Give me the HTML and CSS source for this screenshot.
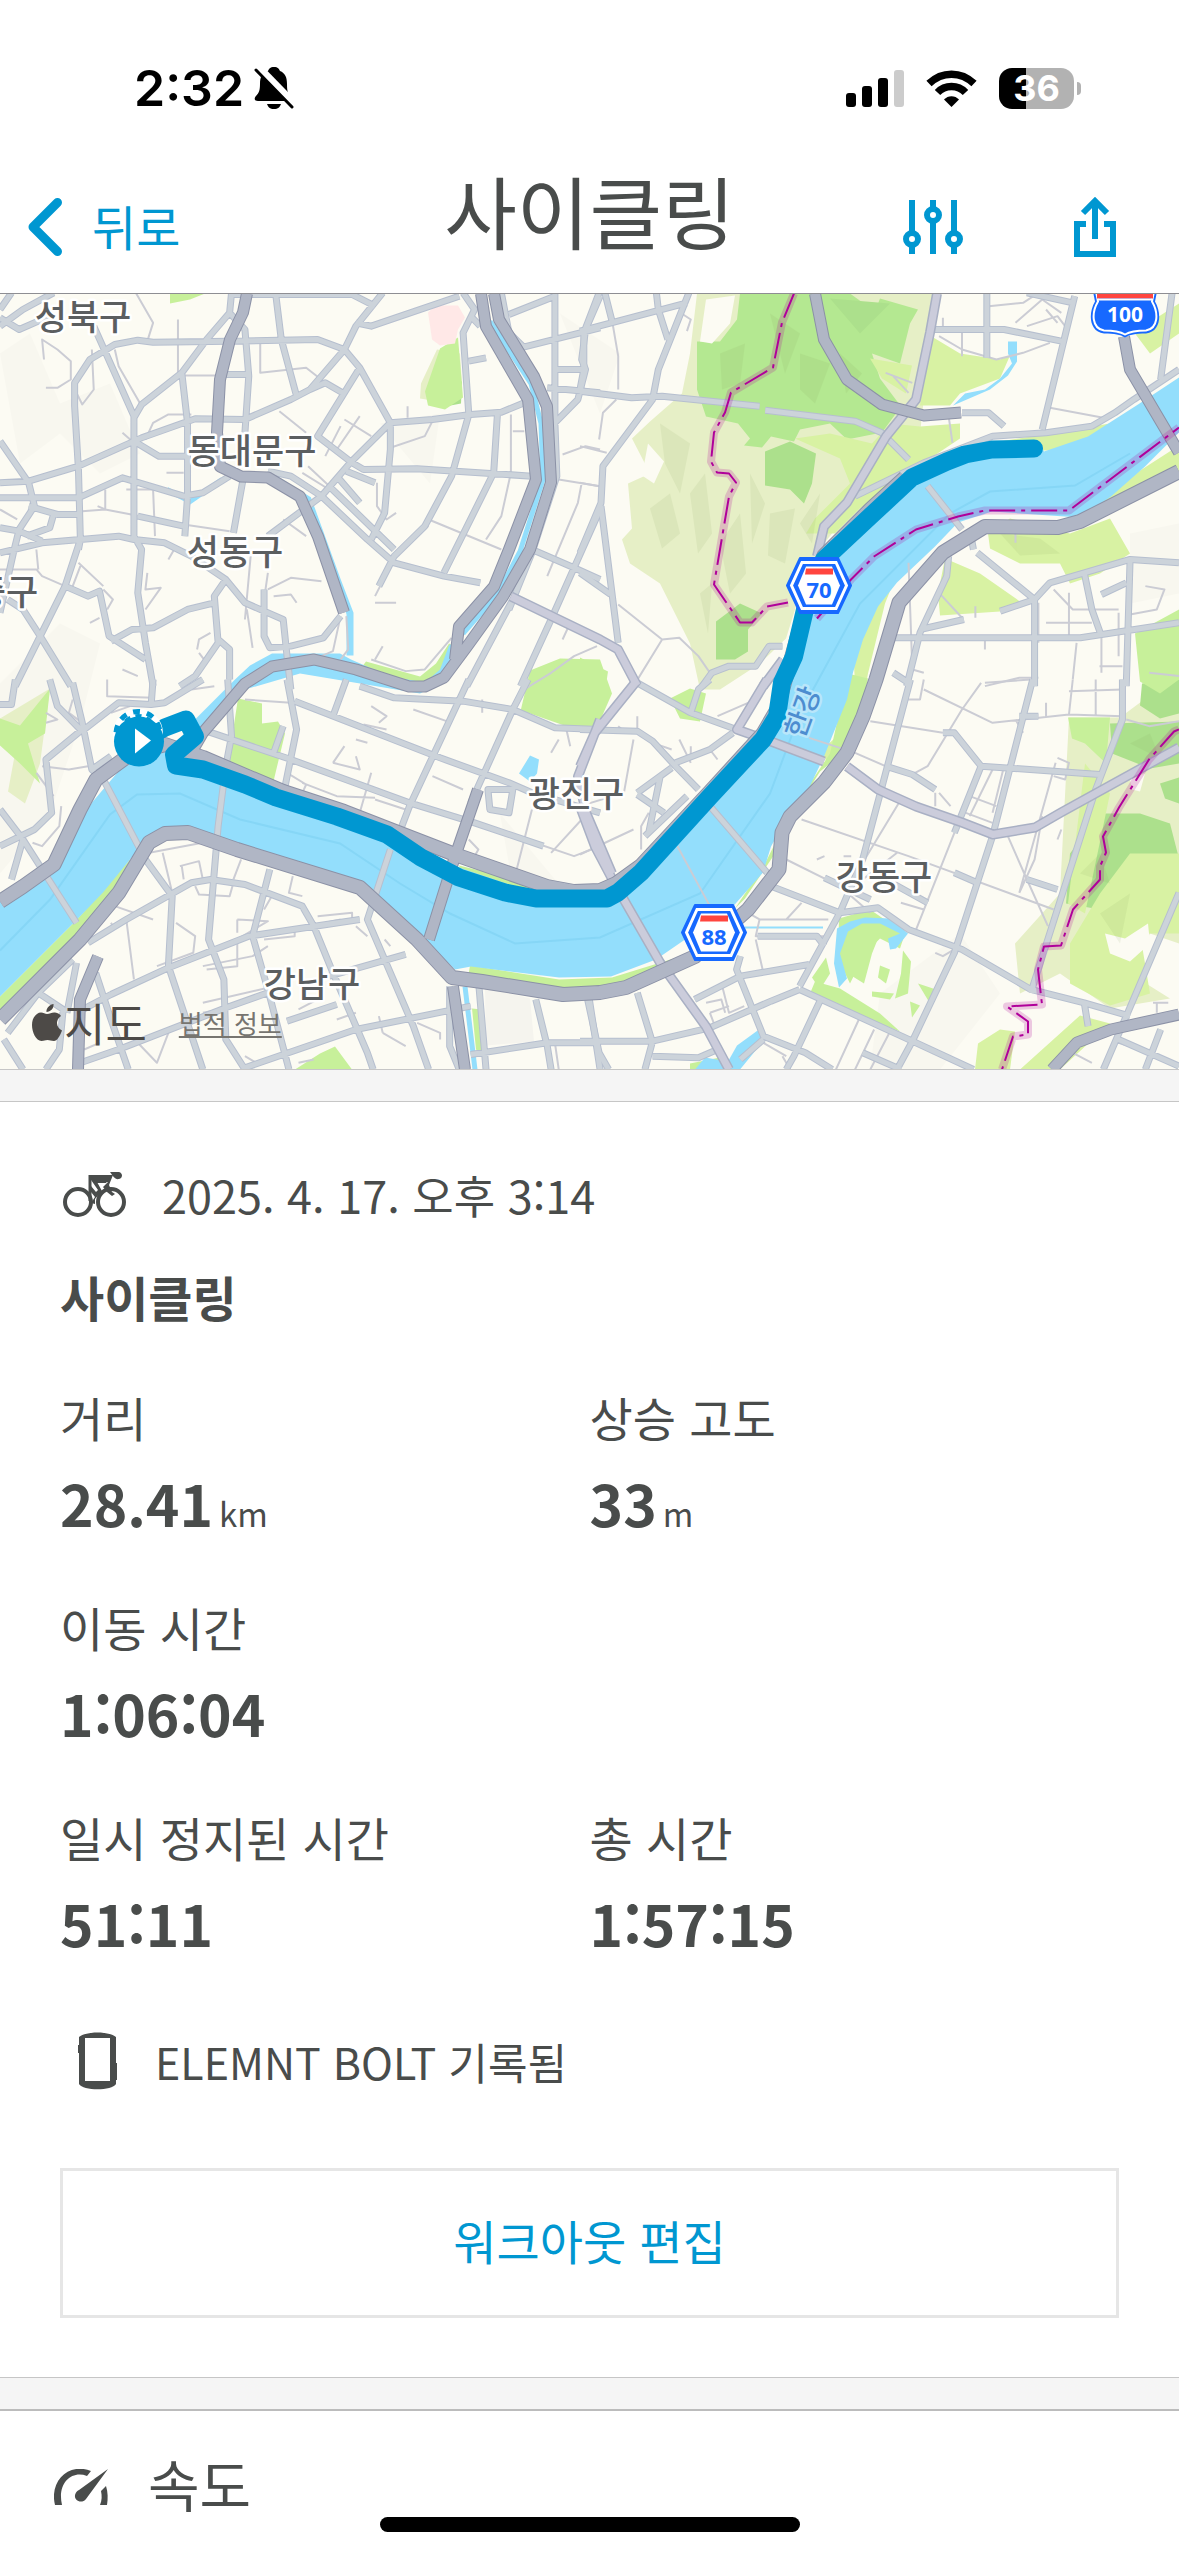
FILE: index.html
```html
<!DOCTYPE html>
<html lang="ko">
    <head>
        <meta charset="utf-8" />
        <meta name="viewport" content="width=device-width, initial-scale=1" />
        <title>사이클링</title>
        <link rel="stylesheet" href="styles.css">
    </head>
    <body>
        <header class="top">
            <div class="status">
                <div class="status-left">
                    <span class="clock">2:32</span>
                    <svg width="40" height="44" viewBox="0 0 40 44">
                        <path d="M20 1c4 0 5 2 6 4 5 2 7 6 7 13 0 8 1 10 4 13 2 2 2 4-1 4H4c-4 0-4-3-2-5 3-3 4-6 4-12 0-7 2-11 8-13 1-2 2-4 6-4zM13 38h14c-1 3-3 5-7 5s-6-2-7-5z" />
                        <path d="M3 0L40 38" stroke="#fff" stroke-width="8" />
                        <path d="M2 4L38 41" stroke="#000" stroke-width="3" stroke-linecap="round" />
                    </svg>
                </div>
                <div class="status-right">
                    <svg width="58" height="37" viewBox="0 0 58 37">
                        <rect x="0" y="23" width="10" height="14" rx="3" />
                        <rect x="16" y="16" width="10" height="21" rx="3" />
                        <rect x="32" y="8" width="10" height="29" rx="3" />
                        <rect x="48" y="0" width="10" height="37" rx="3" fill="#ccc" />
                    </svg>
                    <svg width="51" height="37" viewBox="0 0 51 37">
                        <g fill="none" stroke="#000" stroke-width="7.5">
                            <path d="M3 13.500C16 1 35 1 48 13.500" />
                            <path d="M11.500 22.500C19 14.500 32 14.500 39.500 22.500" />
                        </g>
                        <path d="M25.500 37L18 29.500C22 25 29 25 33 29.500z" />
                    </svg>
                    <div class="battery"><span>36</span></div>
                </div>
            </div>
            <nav class="nav">
                <a class="back" href="#">
                    <svg width="34" height="58" viewBox="0 0 34 58">
                        <path d="M29.500 4.500L5 29L29.500 53.500" fill="none" stroke="#0097d1" stroke-width="9" stroke-linecap="round" stroke-linejoin="round" />
                    </svg>
                    <span>뒤로</span>
                </a>
                <h1>사이클링</h1>
                <div class="tools">
                    <button aria-label="필터">
                        <svg width="60" height="60" viewBox="0 0 60 60" fill="none" stroke="#0097d1" stroke-width="6">
                            <path d="M9 3V36M9 48V57M30 3V12M30 24V57M51 3V36M51 48V57" />
                            <circle cx="9" cy="42" r="6" />
                            <circle cx="30" cy="18" r="6" />
                            <circle cx="51" cy="42" r="6" />
                        </svg>
                    </button>
                    <button aria-label="공유">
                        <svg width="42" height="60" viewBox="0 0 42 60" fill="none" stroke="#0097d1" stroke-width="6">
                            <path d="M12 27H3V57H39V27H30M21 42V5M9 16L21 4L33 16" />
                        </svg>
                    </button>
                </div>
            </nav>
        </header>

        <div class="map">
            <svg class="map-canvas" viewBox="0 0 1179 776" preserveAspectRatio="xMidYMid slice">
                <defs>
                    <!-- local streets, one sheet for each quarter of the map -->
                    <g id="streets">
                        <path transform="translate(0 -4) scale(.3827 .3333)" d="M0 110L60 60L140 10M0 85L50 120L130 80M0 60L30 10M245 110L350 380V750M205 780L210 750L205 540L195 350V280L235 210L300 165L360 152L400 158L600 155L830 150L900 180L940 235L1020 400L1130 390L1230 375L1310 368L1370 340M605 10L600 70L540 150L475 250L370 345L350 385M475 250L490 400V620L483 740M720 10L735 150L775 320M600 15H920L980 50M1000 10L930 110L900 180L810 300L760 330L640 390L510 388L370 445L205 530L75 575L0 580M600 70L640 120L650 260L640 430M590 255H650M930 100L970 110L1200 20M1210 10L1240 60L1210 130L1225 375L1180 560L1110 710L1030 800L990 890M1230 80L1255 110M1225 215L1270 205M940 235L830 440L920 520L950 540L1090 538L1390 560M810 300L850 280L895 310M1020 400L915 520L840 620L700 740M1020 400V480L1005 670L970 750M1300 370L1290 550L1160 850M860 590L1030 780M700 545L760 560L840 620L960 750L1030 820L1160 860L1255 880M905 545L980 580M880 560L940 640M0 455L75 580L90 650L50 720L35 790L0 970M0 625H205L320 565L480 620L530 610L600 560M75 650L150 675H210M140 675L130 715L70 740M0 715L50 725L110 755M0 790L110 760L310 740L350 750L430 760L500 800L590 870L640 940L740 990L750 1100L760 1200M350 560V740L370 780L360 910L380 1060L400 1190M210 750L170 890L105 1040L40 1190M20 930L60 960L105 1040L185 1190M170 890L230 920L260 905L285 1040L380 1110M290 1055L345 1020L400 1015L490 960L560 940M590 870L560 920L570 1060L510 1160L470 1190M570 1050L600 1080V1170M690 900V1040L705 1075L760 1070L845 1045L890 980M635 570L610 730M360 680L480 710M350 455L415 500H490M1310 10L1330 130L1370 175M1450 10V400M1330 75L1450 20M1360 175L1568 115M1568 20L1530 120L1520 210L1530 240L1510 330L1450 400M1450 240H1525M1430 295L1568 310M1450 400L1455 560L1390 790L1330 960M1390 780L1500 835L1568 870M1568 660L1500 835L1440 990L1360 1190M1340 930L1220 1190" />
                        <path transform="translate(580 -4) scale(.382 .3333)" d="M50 10L10 130V240L0 300M0 125L280 40M65 10L85 100M200 10L205 60L230 150M285 10L205 240L190 330L60 530L55 640L0 790M55 650L100 1060M0 305L135 325L215 320L470 350M485 362L720 395L790 430L860 510M925 120H1110L1260 155M1065 10V205M1295 20L1210 420M1170 10L1290 40M1568 240L1450 330L1400 370L1340 410L1220 430L1080 440L900 520L720 620M1550 10L1520 270M910 590L1000 720M1040 790L1190 930V1190M965 800L960 860L890 1030L855 1190M820 1045H1310L1568 1000M890 1020L1005 990M1100 965L1190 930L1230 880L1320 850L1440 810L1568 820M1440 810L1430 1190M1320 850L1340 960L1365 1040M1365 915L1430 880M0 850L80 915M530 1070H495L460 1130H390L345 1150L320 1190M820 1150L860 1180M1000 370H1070L1110 410M1030 780L1020 720" />
                        <path transform="translate(0 386) scale(.3827 .3333)" d="M40 0L30 75H0M130 0L150 80L210 150M190 10L215 130L240 270L270 300L380 540L450 650L440 860L530 1170M215 150L120 240L135 400L90 450L0 500M0 390L60 480L110 570L200 730M60 480L30 600M240 270L290 230M400 0L395 75L310 70L220 150M395 75L430 70L530 0M750 0L775 150L745 320M770 65L1150 235L1330 310L1390 340L1568 400M540 155L760 240L1070 370L1240 430L1420 500M905 0L870 110M940 20L1030 55L1210 65L1340 90L1450 145L1568 150M1225 0L1070 380L1050 440M1380 0L1340 90L1230 370M595 0L605 170L590 260L570 440L545 780L585 900L590 1080L640 1170M1020 510L980 650L960 720L1080 1040L1120 1170M230 790L330 720L500 610L550 600L640 615L790 680L820 740L870 880L960 1120L975 1170M705 570L660 770L700 930L755 1170M290 945L440 865L650 770L940 720M250 880L290 1020L335 1170M20 1060L100 940L190 840M100 940L165 990L155 1110L120 1170M10 1080L60 1170M200 850L175 1000M210 1150L310 1110L590 985L700 940M200 1000L290 945M1060 825L860 890M750 1025L880 975M640 1165L930 1050L1230 980M1175 920V1100L1200 1170M1230 1125L1430 1090H1568M1250 900L1270 1170M1400 960L1430 1100L1440 1170M1540 960L1568 1170M1275 330L1280 390L1330 400L1340 330ZM740 140L715 220" />
                        <path transform="translate(580 386) scale(.382 .3333)" d="M0 150L150 155L190 185L250 260L310 330M150 10L290 100L410 150M290 100L310 30L340 0M250 250L340 210L400 160M150 340L240 265M150 345L220 400M210 290L180 460M280 350L170 470M340 380L490 580M500 620L680 700L780 685L860 750L1000 810L1180 930L1320 970L1440 1010M865 0L740 540L680 700L575 920M1185 0L1080 470L980 820L870 1085L830 1170M1420 0V120L1350 330L1180 940M1050 260L1360 285M950 160H980L1050 260L980 460M800 260L870 285L930 330M1150 110H1200M575 930L870 1085L1030 1170M630 960L560 1130L540 1170M575 930L500 965L340 1045L190 1085H0M300 960L420 890L600 855M420 830L410 870L480 1070L590 1120L660 1170M190 1090L150 940M480 1080L420 1140M20 960L50 1120L75 1170M190 1085L170 1170M190 1130L310 1135L360 1110M465 770H620L640 800M1568 640L1430 1010L1370 1170M1410 1080L1568 1160M740 1120L840 1170M980 580L1040 610M1170 600L1250 630M1320 970L1330 1040M1520 1050L1480 1170M640 595L760 660M800 600L910 670" />
                    </g>
                    <g id="mains">
                        <path d="M511 303L600 346L618 356L637 392M937 0L930 39L916 106L886 143L847 209L824 233L817 263M783 366L763 393" />
                        <path d="M600 426L578 483L586 519L612 580M637 387L595 439L580 473M767 386L737 436L771 448L824 468M847 473L878 496L916 513L962 529L993 541L1035 534L1061 519L1179 454M580 513L595 553L614 589L660 669L706 733L729 776" />
                    </g>
                    <g id="motorways">
                        <path d="M0 608L23 593L54 571L80 516L96 486L130 461L165 451L203 464L283 498L344 518L398 539L455 561L547 593L574 598L600 597L616 590L641 572L710 498L763 440L777 416L805 316L824 262L870 216L905 184M0 726L80 646L119 599L149 549L165 540L188 539L237 556L360 594L417 646L452 684L482 688L563 701L600 699L626 694L695 663L748 616L779 576L782 539L790 523L824 489L847 459L863 423L876 386L899 309L943 259L985 233L1058 234L1080 228L1179 178" />
                    </g>
                    <g id="expressways">
                        <path d="M481 0L486 33L528 106L536 186L509 256L494 293L459 333L455 366M494 0L499 26L534 83L547 113L551 189L530 256L503 303L467 353L444 384L425 393H409L356 376L314 366L272 373L245 390L203 439L192 458M247 0L243 19L230 46L220 86L217 139L220 173L241 183L268 184L300 203L318 243L344 319M815 0L824 46L847 86L882 111L924 122L961 119M1124 43L1130 76L1179 159M1052 776L1077 749L1111 736L1179 721M478 496L455 563L429 646M453 693L465 776M98 663L80 706L78 776" />
                    </g>
                </defs>

                <rect width="1179" height="776" fill="#fcfbf3" />

                <!-- hillsides -->
                <path class="shade" d="M0 60L30 40L60 110L110 90L140 160L100 180L60 140L20 170ZM0 390L30 360L60 330L100 350L80 430L50 520L0 580ZM560 20L620 60L600 120ZM500 520L530 690L600 640ZM870 40L900 60ZM1130 240L1179 230V300L1130 310ZM880 700L960 640L1000 700L940 776H870ZM380 130L440 120L430 190Z" />

                <!-- parks and woods -->
                <path class="pale" d="M697 0L690 60L682 100L650 128L632 145L650 180L628 190L632 235L622 246L630 270L660 290L670 310L690 350L700 396H720L760 370L786 345L800 300L824 250L860 205L900 175L920 140L930 50L937 0Z" />
                <path class="pale" d="M1069 424L1120 424L1179 380V650L1150 640L1130 680L1170 705L1110 715L1060 680L1020 700L1015 650L1060 600ZM421 90L437 56L460 60L462 90L450 110L420 105ZM0 425L50 395L40 470L25 510L8 498L15 460L0 450Z" />
                <path class="green" d="M740 0L737 26L720 48L697 48V96L706 123L738 130L750 145L744 152L762 154L771 143L794 148L800 136L830 130L847 146L882 139L901 113L880 85L872 60L900 70L910 30L918 16L880 5L875 18L850 0Z" />
                <path class="leaf" d="M765 158L790 148L816 160L812 190L804 210L790 196L765 192ZM716 328L740 310L762 320L748 336V358L735 366L716 366ZM430 106L440 86L462 88L461 110L440 114ZM1110 430L1179 428V470L1150 475L1112 460ZM1070 560L1100 520L1140 520L1170 530L1179 565L1130 580L1110 600L1100 616L1066 610ZM1142 390L1179 386V420L1160 425L1140 412ZM830 5L890 10L860 40ZM1160 490L1179 484V510L1165 505Z" />
                <path class="lime" d="M930 42L960 60L1000 66L1010 62L1000 85L960 100L950 112L920 112ZM795 145L830 140L872 150L890 130L920 133L960 130L960 145L900 185L860 215L835 240L806 240L815 225L850 190L840 165ZM870 65L912 72L906 100L882 85ZM985 156L1000 148L1110 130L1100 142L1050 157ZM988 240L1010 225L1070 240L1110 225L1130 260L1100 280L1070 290L1060 270L1020 270L990 255ZM945 265L980 280L1020 308L1000 318L940 322L938 300ZM1080 228L1120 190L1179 152V178L1090 222ZM1070 650L1100 600L1130 560L1179 560V640L1140 640L1150 700L1110 712L1070 690ZM975 776L978 750L1000 736L1015 738L1010 776ZM1020 776L1080 722L1110 730L1060 776ZM1085 470L1110 500L1085 620L1068 610ZM1120 20L1140 35L1179 10V40L1150 60ZM850 300L897 280L885 310L868 380L855 450L835 480L820 458L840 440L855 390Z" />
                <path class="grass" d="M238 405L262 410V430L278 428L285 440L272 494L240 482L228 470ZM520 420L530 377L560 365L600 366L612 400L598 432L570 434L530 420ZM580 364L608 378L600 432H580ZM670 405L690 395L706 400L700 428L680 425ZM425 98L440 55L458 44L463 104L445 116L428 112ZM170 0L205 0L190 6L170 10ZM0 425L20 432L50 395L45 440L28 450L40 490L20 470L0 452ZM1135 340L1179 316V386L1160 400L1140 388ZM1068 424H1110L1106 470L1085 450L1072 445ZM445 384L455 353L449 350L436 370L420 383L366 368L360 376L410 390ZM0 703L77 626L130 566L133 580L80 650L0 722ZM295 776L320 760L335 753L352 776ZM839 625L870 616L905 640L900 655L880 645L865 660L850 690L838 665ZM815 688L840 695L880 720L900 738L860 722L810 700ZM470 672L559 686L612 684L690 660L688 672L620 694L558 698L468 684ZM459 572L500 582L545 600H500L462 582ZM472 715L482 716V760L476 756ZM848 380L868 385L855 450L820 478L800 510L775 560L745 605L735 615L765 570L790 520L830 460ZM690 770L720 764L735 776H690ZM903 657L911 668L908 700L895 705L901 680Z" />
                <path class="grass" d="M846 640L868 626L880 640L872 660L864 690L848 680ZM880 672L890 676L886 690L878 684ZM872 698L894 700L890 706L872 703ZM910 708L920 712L912 724ZM918 690L936 696L930 710ZM812 684L826 664L830 680L820 696Z" />
                <path fill="#fcfbf3" d="M1105 640L1125 645L1148 630L1150 650L1130 668L1110 660ZM1130 486L1145 480L1140 498L1132 496ZM706 6L735 2L730 30L712 50L700 48ZM648 150L664 168L654 190L642 182Z" />
                <g class="ridges">
                    <path d="M660 130L690 150L680 200L665 170ZM690 200L705 180L712 240L698 260ZM650 215L670 200L680 240L662 255ZM720 250L740 220L746 280L730 300ZM750 180L765 210L752 250ZM770 220L795 215L785 270L768 262ZM700 300L712 290L708 340ZM800 230L820 200L812 250Z" />
                    <path d="M720 60L745 50L740 90L722 96ZM770 20L800 40L785 80ZM800 60L830 70L815 110L800 96ZM840 60L862 80L846 100ZM1080 580L1100 560L1110 590ZM1130 450L1150 440L1160 465ZM1100 620L1130 600L1120 650ZM1000 240L1040 245L1060 260L1020 262Z" />
                </g>
                <path fill="#ffe8e7" d="M428 19L436 12L458 12L465 24L458 36L455 50L440 52L432 46L430 32Z" />
                <path fill="#f5f4ee" d="M485 694L530 705L534 748L486 752Z" />

                <!-- water -->
                <path class="water" d="M0 606L57 566L92 509L126 469L145 455L165 446L191 463L245 488L337 520L387 536L459 574L536 600L607 602L641 575L710 500L763 440L777 420L782 386L805 316L824 266L870 220L912 182L947 165L992 152L1040 150L1044 158L1088 143L1138 111L1179 84V139L1145 173L1111 203L1080 224L992 218L958 229L935 253L897 289L878 313L863 346L853 379L847 406L824 463L805 503L788 523L771 553L763 579L733 613L656 666L611 683L559 684L471 673L455 676L421 643L379 609L356 588L268 564L214 546L180 533L153 539L130 566L103 599L77 626L0 703Z" />
                <path class="water" d="M235 386L250 372L272 360H340L351 366L390 383L425 389L440 376L449 352L460 345L450 385L420 400L300 380L245 396L195 448L183 438Z" />
                <path class="water" d="M953 112L965 100L985 96L1000 85L1012 70L1008 60V48H1017V68L1008 82L990 96ZM519 480L530 462L539 466L537 480L530 488ZM728 768L737 752L759 736L763 748L740 776H695L705 764ZM837 635L850 628L865 624L890 625L908 640L896 655L890 656L888 645L900 640L880 630L862 630L848 638L840 660L847 685L839 694L834 670Z" />
                <path d="M276 186L308 206L337 286L350 320V362" fill="none" stroke="#93defc" stroke-width="7" />
                <path d="M490 28L531 90L541 130L543 186L520 258L498 300L463 340M465 693L475 776M167 196L190 208L222 186" fill="none" stroke="#93defc" stroke-width="5" />
                <path d="M745 634H823" fill="none" stroke="#93defc" stroke-width="2" />
                <path d="M0 657L50 606L110 521L137 501L180 500L240 526L340 550L400 590L450 620L515 650L600 644L700 600L770 500L800 420L860 310L950 220L990 198L1075 192L1130 160" fill="none" stroke="#86d6f6" stroke-width="2" />

                <!-- lanes -->
                <g class="lanes">
                    <path transform="translate(0 -4) scale(.3827 .3333)" d="M355 10L400 100L385 155M465 90V250M115 210L110 150L150 180L185 215V270L150 295H120M240 180L245 300L215 345L200 310M300 180L310 230L365 340M680 160V250L800 235L850 280M470 258H590M380 450L400 400L440 375H500M320 430L350 460M730 365L800 430M850 500L890 410M880 480L940 380M900 390L970 440M1065 350V385M1130 395L1110 440L1020 475M1335 375V550L1310 680L1270 750M1120 690L1310 780M1340 425H1370M1470 495L1530 470L1568 480M1460 570L1568 590M1520 580L1510 640L1430 860M0 660L45 690M215 665L275 660L480 705L600 725M275 600V660L255 650M400 600L405 740M330 600H400M435 550H480M440 810L455 780M0 840H95L110 860L170 890M95 780L100 840M205 820L270 890M210 830L190 890M385 850L380 900L420 895L380 960M270 900L295 930L280 960M235 1000L260 985M320 1140L360 1160M515 1080L520 1050L550 1030M520 1090L540 1120M640 990L655 800M700 850L690 930M700 900L760 865L840 875M715 920L760 915L775 940M980 940H1035M980 920L1020 830M1000 1070L980 1110M970 1110L1060 1145L1110 1140L1180 1045M1560 1070L1500 1100L1440 1150L1370 1200M1470 1050L1490 1000M790 550L860 600M805 530L870 600M985 580V650L1010 690L1035 670M1100 720L1120 710M645 960L660 1075M740 690L800 740M890 980L870 1085L840 1100M905 980L910 1080L890 1110" />
                    <path transform="translate(580 -4) scale(.382 .3333)" d="M85 100L100 200V300M0 470L70 490M95 330L60 370L50 450M0 580L50 590M270 75L290 90L280 125M950 85V115M1000 120V200M940 140L1000 180L1090 210L1160 190L1230 160M1070 50L1160 40L1200 10M1140 100L1210 30L1260 70M1170 110L1250 80L1270 110M1250 100L1220 60M1230 355L1370 385M965 380L975 460M800 250L870 280M820 260L860 310M700 1000M100 945L215 1050L260 1045L310 1100L340 1150M215 1050L140 1190M940 910L1000 985M1035 950V985M1060 1050V1080M1200 940V1060M1220 1000H1340M1280 910V1040M1240 900L1290 960H1410M1300 1060L1290 1170M1365 1040V1150M1410 970V1100M1360 1130H1420M1480 890L1530 900L1510 960L1440 975M1060 1190L1150 1165H1200M1140 730V760M1490 1150L1568 1160M860 820L870 1140L900 1150" />
                    <path transform="translate(0 386) scale(.3827 .3333)" d="M280 0V50L400 55M190 60L180 100L215 130M120 130L150 120L120 100M110 260L180 270L230 260M160 380L155 440L110 500L85 490M95 280L140 350M290 100L340 80M500 30L560 20M640 60L760 70M970 80L1010 110L990 130M950 135L1010 150M1080 90L1180 130M930 180L960 190M870 250L900 200M870 250L940 270L930 230M790 310L880 350L980 355M980 360L1060 390M750 280L800 315L790 340M1130 290L1210 330M1480 150L1490 200M1390 390L1350 570M1270 440L1500 530L1568 500M1440 520L1520 420M390 520L550 485M425 520L450 640M470 560L520 545L530 600M480 600L475 560M510 620L520 645L600 650L610 610M630 540L610 600M765 590L755 640L790 650M690 690L710 650M620 720L700 725L620 780V860L540 870M620 720V760M690 780L770 770V750M700 800L660 830L530 860M460 730L510 770L505 820L410 860M300 680L400 720M330 720L350 900M290 730L300 750M830 710L920 700V720M850 730L890 720M930 740L960 770M1005 780L1020 800M530 970L700 925M530 1000L620 980M780 990L830 960M880 1020L930 1000M990 1010L1000 1060M1090 1030L1150 1060V1080M1000 1060L1060 1100M360 1090L410 1150L440 1060M220 1110L260 1090M780 1150L820 1140M640 1130L670 1150M1225 480L1250 510L1240 530M1450 1090L1460 1170M1440 220L1460 180M970 280L940 400M1260 60V100" />
                    <path transform="translate(580 386) scale(.382 .3333)" d="M140 180L115 340L0 380M0 525L140 450M100 140L120 160M150 110V150M160 510V440L180 400M190 190L240 210M290 200V230M260 180L290 250M360 110L440 70M340 210L360 240M255 500L340 680M600 175L720 220L810 265M760 125L950 160M900 0L890 60H850M900 30L1080 130L1280 105L1420 110M1000 90L910 260L870 285M1050 10L1000 90M1350 0V110M1290 0L1280 105M1220 110V70M1140 120L1160 160M1180 0L1060 10M1280 35L1420 30M1430 120L1490 140L1568 125M1250 235L1280 250L1270 300L1240 290M1245 250L1150 640M1080 270L1020 410M1060 250M1110 260L1080 400M1020 350L1090 380M1010 400L1080 430M930 340V380M940 340L970 380M580 420L860 530L1240 690M835 370L740 550M980 460L880 750M830 520L740 600M540 540L680 620L760 700M1120 470L1170 600L1225 740M1210 410L1190 540L1150 640M1260 450L1250 480M820 200L810 230M440 700L470 720H650M470 720L460 770H640M580 670L540 720M460 780L480 880M840 670L900 690M620 540L640 530M690 530H710M330 970L370 960L380 1000M340 1000L390 980M370 910L390 1000L430 980M340 1000L350 1030M730 1020L670 1170M770 1050L720 1170M810 1060L760 1170M530 1130L550 1170M480 1090L540 1130M930 820L950 830L980 810M1410 1090L1520 1130M1290 1120L1340 1150M1500 970H1540M1510 1000V970" />
                </g>

                <use class="street-edge" href="#streets" />
                <use class="street" href="#streets" />
                <use class="main-edge" href="#mains" />
                <use class="main" href="#mains" />
                <use class="express-edge" href="#expressways" />
                <use class="motor-edge" href="#motorways" />
                <use class="express" href="#expressways" />
                <use class="motor" href="#motorways" />

                <!-- city limits -->
                <g class="limits">
                    <path class="halo" d="M794 0L782 29L773 74L731 99L725 119L714 139L711 168L717 179L729 180L736 189L729 203L714 291L740 329H752L767 313L788 309M817 325L851 286L874 263L916 236L958 223L985 217H1069L1179 134M1179 436L1174 438L1149 466L1119 514L1103 543L1106 559L1100 573V586L1073 616L1061 652L1044 653L1038 676L1042 711L1007 713L1028 728V741L1013 743L1002 776" />
                    <path class="dash" d="M794 0L782 29L773 74L731 99L725 119L714 139L711 168L717 179L729 180L736 189L729 203L714 291L740 329H752L767 313L788 309M817 325L851 286L874 263L916 236L958 223L985 217H1069L1179 134M1179 436L1174 438L1149 466L1119 514L1103 543L1106 559L1100 573V586L1073 616L1061 652L1044 653L1038 676L1042 711L1007 713L1028 728V741L1013 743L1002 776" />
                </g>

                <!-- recorded track -->
                <path class="track" d="M150 442L165 434L186 426L195 443L174 461L176 472L203 476L245 491L276 504L337 523L387 541L421 564L459 584L505 599L536 605H607L618 599L641 579L710 503L763 446L777 423L782 389L794 363L805 316L824 266L870 223L912 184L947 168L965 161L992 156L1034 155" />
                <circle cx="138" cy="440" r="20" fill="none" stroke="#fff" stroke-width="10" />
                <circle cx="138" cy="440" r="22" fill="none" stroke="#0097d1" stroke-width="5" stroke-dasharray="7 7" />
                <circle cx="138" cy="440" r="17" fill="none" stroke="#0097d1" stroke-width="5" stroke-dasharray="6 5" />
                <circle cx="139" cy="448" r="25" fill="#0097d1" />
                <path d="M135 435L151 447L135 460Z" fill="#fff" />

                <!-- road shields -->
                <g transform="translate(819 292)">
                    <path d="M-19 -27.500H19L32 0L19 27.500H-19L-32 0Z" fill="#1769ff" stroke="#1769ff" stroke-width="2" stroke-linejoin="round" />
                    <path d="M-17 -23H17L27.500 0L17 23H-17L-27.500 0Z" fill="none" stroke="#fff" stroke-width="3" />
                    <path d="M-13 -19H13L21 0L13 19H-13L-21 0Z" fill="#fff" />
                    <path d="M-13 -17H14V-11H-14Z" fill="#ff453f" />
                    <text class="shield-no" y="12">70</text>
                </g>
                <g transform="translate(714 639)">
                    <path d="M-19 -27.500H19L32 0L19 27.500H-19L-32 0Z" fill="#1769ff" stroke="#1769ff" stroke-width="2" stroke-linejoin="round" />
                    <path d="M-17 -23H17L27.500 0L17 23H-17L-27.500 0Z" fill="none" stroke="#fff" stroke-width="3" />
                    <path d="M-13 -19H13L21 0L13 19H-13L-21 0Z" fill="#fff" />
                    <path d="M-13 -17H14V-11H-14Z" fill="#ff453f" />
                    <text class="shield-no" y="12">88</text>
                </g>
                <g>
                    <path d="M1093 -2L1095 8C1088 20 1089 38 1104 40C1115 40 1120 41 1125 44C1130 41 1135 40 1146 40C1161 38 1162 20 1155 8L1157 -2Z" fill="#1769ff" />
                    <path d="M1096 -2L1098 8C1091 20 1092 35 1104 37C1115 37 1120 38 1125 41C1130 38 1135 37 1146 37C1158 35 1159 20 1152 8L1154 -2Z" fill="none" stroke="#fff" stroke-width="2" />
                    <path d="M1097 0H1153V5H1097Z" fill="#ff453f" />
                    <path d="M1098 6H1152" stroke="#fff" stroke-width="2" />
                    <text class="shield-no light" x="1125" y="28">100</text>
                </g>

                <g class="places">
                    <text x="83" y="36">성북구</text>
                    <text x="252" y="170">동대문구</text>
                    <text x="235" y="271">성동구</text>
                    <text x="6" y="311">중구</text>
                    <text x="576" y="513">광진구</text>
                    <text x="312" y="703">강남구</text>
                    <text x="884" y="596">강동구</text>
                    <text class="river" transform="translate(812 422) rotate(-70)">한강</text>
                </g>
            </svg>
            <div class="attribution">
                <span class="maker">
                    <svg width="30" height="38" viewBox="0 0 30 38">
                        <path d="M15 10C18 10 20 8 23 8.500C26 9 28 10 29 12C23 16 24 24 30 26.500C28 32 25 37 22 37C19 37 18 36 15.500 36C13 36 12 37 9.500 37C4 37 0 28 0 21C0 13 5 8.500 9 8.500C11.500 8.500 13 10 15 10ZM14.500 8C14 4 18 .5 21.500 0C22 4 19 8 14.500 8Z" fill="#4d4a47" />
                    </svg>
                    지도
                </span>
                <a href="#">법적 정보</a>
            </div>
        </div>

        <main>
            <section class="summary">
                <div class="when">
                    <svg width="63" height="46" viewBox="0 0 63 46">
                        <g fill="none" stroke="#494c4b" stroke-width="4">
                            <circle cx="15" cy="30" r="13" />
                            <circle cx="48" cy="30" r="13" />
                        </g>
                        <path d="M26 3H50L46 13L49 20L52 22L49 24L44 20L40 15L45 10H34L39 19L32 27V32L28 31L32 25L28 20V14L33 20L35 18L26 5Z" fill="#494c4b" />
                        <path d="M27 3V29" stroke="#494c4b" stroke-width="3" />
                        <path d="M28 4H48L43 11H34Z" fill="#494c4b" />
                        <path d="M47 0H56C60 1 60 6 56 7C52 8 50 4 47 0Z" fill="#494c4b" />
                    </svg>
                    <time datetime="2025-04-17T15:14">2025. 4. 17. 오후 3:14</time>
                </div>
                <h2>사이클링</h2>
                <dl class="stats">
                    <div>
                        <dt>거리</dt>
                        <dd>28.41<small>km</small></dd>
                    </div>
                    <div>
                        <dt>상승 고도</dt>
                        <dd>33<small>m</small></dd>
                    </div>
                    <div class="wide">
                        <dt>이동 시간</dt>
                        <dd>1:06:04</dd>
                    </div>
                    <div>
                        <dt>일시 정지된 시간</dt>
                        <dd>51:11</dd>
                    </div>
                    <div>
                        <dt>총 시간</dt>
                        <dd>1:57:15</dd>
                    </div>
                </dl>
                <div class="device">
                    <svg width="39" height="58" viewBox="0 0 39 58" fill="#494c4b">
                        <path fill-rule="evenodd" d="M1 5C8 -1 31 -1 38 5V52C34 59 5 59 1 52ZM7 6V49H32V6Z" />
                        <rect x="0" y="13" width="3" height="8" />
                        <rect x="36" y="31" width="3" height="17" />
                    </svg>
                    <span>ELEMNT BOLT 기록됨</span>
                </div>
                <button class="edit">워크아웃 편집</button>
            </section>
            <section class="speed">
                <svg width="54" height="36" viewBox="0 0 54 36" fill="#494c4b">
                    <path d="M1 36C-5 12 15 -7 37 2L33 7C17 1 3 15 8 36Z" />
                    <path d="M54 0L32 30C28 35 20 32 21 26C22 23 23 22 25 21Z" />
                    <path d="M52 17C54 23 54 30 53 36H46C48 31 48 27 47 22Z" />
                </svg>
                <h3>속도</h3>
            </section>
        </main>
        <div class="home-bar"></div>
    </body>
</html>
```

FILE: styles.css
```css
html, body {
    margin: 0;
    padding: 0;
}
body {
    min-height: 100vh;
    background: #fff;
    color: #494c4b;
    font-family: "Noto Sans CJK KR", sans-serif;
    font-size: 47px;
    line-height: 60px;
}
h1, h2, h3, dl, dd {
    margin: 0;
}
svg {
    display: block;
    flex: none;
}
button {
    font: inherit;
    color: #0097d1;
    background: none;
    border: 0;
    padding: 0;
}

/* header */
.top {
    border-bottom: 1px solid #8e8e93;
}
.status {
    display: flex;
    justify-content: space-between;
    align-items: center;
    height: 176px;
    padding: 0 105px 0 134px;
    box-sizing: border-box;
    font-family: Inter, sans-serif;
    color: #000;
}
.status-left {
    display: flex;
    align-items: center;
    gap: 10px;
}
.clock {
    font-size: 50px;
    font-weight: 600;
}
.status-right {
    display: flex;
    align-items: center;
    gap: 22px;
}
.battery {
    position: relative;
    width: 75px;
    height: 41px;
    border-radius: 13px;
    background: linear-gradient(to right, #000 27px, #b2b2b2 27px);
    color: #fff;
    font-size: 36px;
    font-weight: 700;
    line-height: 41px;
    text-align: center;
}
.battery::after {
    content: "";
    position: absolute;
    right: -7px;
    top: 14px;
    width: 4px;
    height: 13px;
    border-radius: 0 4px 4px 0;
    background: #b2b2b2;
}
.nav {
    display: grid;
    grid-template-columns: 1fr auto 1fr;
    align-items: center;
    height: 117px;
    padding: 0 28px 16px;
    box-sizing: border-box;
    color: #0097d1;
}
.back {
    display: flex;
    align-items: center;
    gap: 30px;
    color: inherit;
    font-size: 48px;
    text-decoration: none;
}
.back span {
    padding-bottom: 4px;
}
.nav h1 {
    align-self: start;
    color: #494c4b;
    font-size: 79px;
    font-weight: 400;
    line-height: 68px;
}
.tools {
    display: flex;
    justify-content: flex-end;
    gap: 111px;
    padding-right: 35px;
}

/* map */
.map {
    position: relative;
    height: 776px;
    box-sizing: border-box;
    overflow: hidden;
    border-bottom: 1px solid #c6c6c6;
}
.map-canvas {
    width: 100%;
    height: 100%;
}
.map-canvas path {
    vector-effect: non-scaling-stroke;
}
.shade {
    fill: #f8f7ef;
}
.pale {
    fill: #e6efc6;
}
.green {
    fill: #b4e891;
}
.leaf {
    fill: #ace08c;
}
.lime {
    fill: #d8f2a3;
}
.grass {
    fill: #c7f09a;
}
.ridges {
    fill: #7f9a55;
    opacity: .1;
}
.water {
    fill: #93defc;
}
.lanes, .street, .street-edge, .main, .main-edge,
.motor, .motor-edge, .express, .express-edge {
    fill: none;
    stroke-linejoin: round;
}
.lanes {
    stroke: #cbccd4;
    stroke-width: 2px;
}
.street-edge {
    stroke: #b6bfcf;
    stroke-width: 7px;
}
.street {
    stroke: #ccd3da;
    stroke-width: 5px;
}
.main-edge {
    stroke: #a9b0c4;
    stroke-width: 10px;
}
.main {
    stroke: #cbccdb;
    stroke-width: 7px;
}
.express-edge {
    stroke: #8b91a6;
    stroke-width: 12px;
}
.express {
    stroke: #b0b6c5;
    stroke-width: 10px;
}
.motor-edge {
    stroke: #8b91a6;
    stroke-width: 15px;
}
.motor {
    stroke: #b0b6c5;
    stroke-width: 13px;
}
.limits {
    fill: none;
    stroke: #b0009a;
    stroke-linejoin: round;
}
.limits .halo {
    stroke-width: 8px;
    opacity: .2;
}
.limits .dash {
    stroke-width: 2px;
    stroke-dasharray: 26 6 4 6;
}
.track {
    fill: none;
    stroke: #0097d1;
    stroke-width: 18px;
    stroke-linecap: round;
    stroke-linejoin: round;
}
.shield-no {
    fill: #1769ff;
    font-family: "Open Sans", sans-serif;
    font-size: 22px;
    font-weight: 700;
    text-anchor: middle;
}
.shield-no.light {
    fill: #fff;
    font-size: 21px;
}
.places {
    fill: #5b5e60;
    font-size: 35px;
    font-weight: 500;
    text-anchor: middle;
    stroke: #fff;
    stroke-width: 5px;
    stroke-linejoin: round;
    paint-order: stroke;
}
.places .river {
    fill: #4d8dd0;
    stroke: #b9e6fa;
    font-size: 28px;
}
.attribution {
    position: absolute;
    left: 32px;
    bottom: 16px;
    display: flex;
    align-items: center;
    gap: 32px;
    color: #4d4a47;
}
.maker {
    display: flex;
    align-items: center;
    gap: 2px;
    font-size: 45px;
}
.attribution a {
    color: #777570;
    font-size: 26px;
}

/* workout summary */
main {
    background: #f5f5f5;
    padding-top: 31px;
}
.summary {
    padding: 63px 60px 59px;
    background: #fff;
    border-top: 1px solid #c6c6c6;
    border-bottom: 1px solid #c6c6c6;
}
.when {
    display: flex;
    align-items: center;
    gap: 36px;
    padding-left: 3px;
    font-size: 45px;
}
.summary h2 {
    margin-top: 41px;
    font-size: 48px;
    font-weight: 700;
}
.stats {
    display: grid;
    grid-template-columns: 1fr 1fr;
    row-gap: 60px;
    margin-top: 61px;
}
.stats .wide {
    grid-column: 1 / -1;
}
.stats dd {
    margin-top: 20px;
    font-size: 57px;
    font-weight: 700;
    line-height: 70px;
}
.stats small {
    margin-left: 6px;
    font-size: 33px;
    font-weight: 400;
    line-height: 1;
}
.device {
    display: flex;
    align-items: center;
    gap: 38px;
    margin-top: 74px;
    padding-left: 18px;
    font-size: 43px;
}
.edit {
    display: block;
    width: 100%;
    height: 150px;
    margin-top: 77px;
    padding-bottom: 6px;
    border: 3px solid #e6e6e6;
}
.speed {
    display: flex;
    align-items: center;
    gap: 40px;
    margin-top: 31px;
    padding: 37px 54px;
    height: 70px;
    background: #fff;
    border-top: 2px solid #bcbcbc;
}
.speed svg {
    margin-top: 8px;
}
.speed h3 {
    font-size: 56px;
    font-weight: 400;
}

.home-bar {
    position: fixed;
    left: 50%;
    bottom: 24px;
    width: 420px;
    height: 15px;
    margin-left: -210px;
    border-radius: 8px;
    background: #000;
}
```
